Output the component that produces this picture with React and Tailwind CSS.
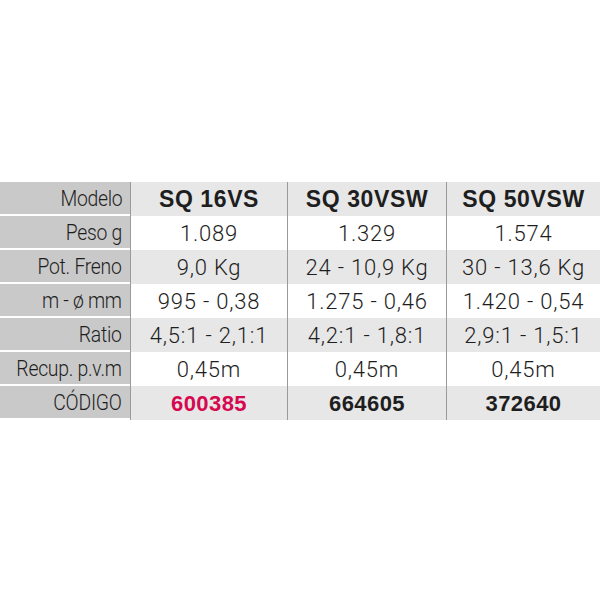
import React from 'react';

const rows = [
  { label: 'Modelo', values: ['SQ 16VS', 'SQ 30VSW', 'SQ 50VSW'], head: true },
  { label: 'Peso g', values: ['1.089', '1.329', '1.574'] },
  { label: 'Pot. Freno', values: ['9,0 Kg', '24 - 10,9 Kg', '30 - 13,6 Kg'] },
  { label: 'm - ø mm', values: ['995 - 0,38', '1.275 - 0,46', '1.420 - 0,54'] },
  { label: 'Ratio', values: ['4,5:1 - 2,1:1', '4,2:1 - 1,8:1', '2,9:1 - 1,5:1'] },
  { label: 'Recup. p.v.m', values: ['0,45m', '0,45m', '0,45m'] },
  { label: 'CÓDIGO', values: ['600385', '664605', '372640'], code: true },
];

const App = () => {
  return (
    <div className="w-[600px] h-[600px] bg-white pt-[182px]">
      <div className="grid grid-cols-[130px_157px_159px_1fr]">
        {rows.map((row, i) => {
          const gray = i % 2 === 0;
          let textCls = 'font-light text-[22px] tracking-[0.8px]';
          if (row.head) textCls = 'font-bold text-[23px] tracking-[0.6px]';
          if (row.code) textCls = 'font-bold text-[22px] tracking-[0.4px]';
          return (
            <React.Fragment key={row.label}>
              <div
                className="h-[34px] bg-[#c9c9c9] border-b-2 border-white flex items-center justify-end pr-[8px] text-[22px] font-light text-[#1e1e1e] tracking-[-0.3px]"
                style={{ fontFamily: 'Roboto, "Liberation Sans", sans-serif' }}
              >
                <span className="inline-block whitespace-nowrap scale-x-[0.88] origin-right">{row.label}</span>
              </div>
              {row.values.map((v, j) => {
                const color = row.code && j === 0 ? 'text-[#d6084f]' : 'text-[#1e1e1e]';
                return (
                  <div
                    key={j}
                    className={`h-[34px] flex items-center justify-center border-l border-[#9a9a9a] ${gray ? 'bg-[#e7e7e7]' : 'bg-white'} ${color} ${textCls}`}
                    style={{ fontFamily: row.head || row.code ? '"Liberation Sans", Arial, sans-serif' : 'Roboto, "Liberation Sans", sans-serif' }}
                  >
                    {v}
                  </div>
                );
              })}
            </React.Fragment>
          );
        })}
      </div>
    </div>
  );
};

export default App;
